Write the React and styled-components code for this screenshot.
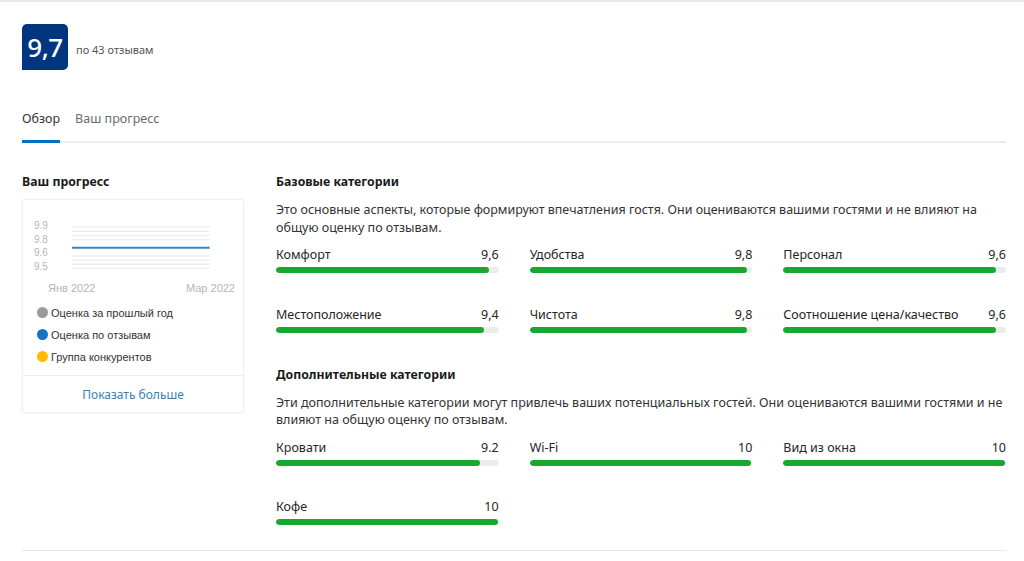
import React from 'react'
import styled, { createGlobalStyle } from 'styled-components';

const GlobalStyle = createGlobalStyle`
  body {
    margin: 0;
    background: #fff;
    font-family: "Noto Sans", "Open Sans", sans-serif;
    color: #262626;
  }
`;

const Page = styled.div`
  border-top: 2px solid #e8e8e8;
  padding: 22px 18px 0 22px;
`;

const Header = styled.div`
  display: flex;
  align-items: center;
  gap: 8px;
`;

const ScoreBadge = styled.div`
  width: 46px;
  height: 46px;
  background: #003580;
  border-radius: 5px 5px 5px 0;
  color: #fff;
  display: flex;
  align-items: center;
  justify-content: center;
  font-size: 26px;
  font-weight: 500;
  letter-spacing: -0.5px;
`;

const ReviewCount = styled.span`
  font-size: 11px;
  color: #555;
  padding-top: 4px;
`;

const Tabs = styled.div`
  display: flex;
  gap: 15px;
  margin-top: 40px;
  border-bottom: 2px solid #ececec;
`;

const Tab = styled.div`
  font-size: 12.5px;
  color: ${p => (p.$active ? '#333' : '#6b6b6b')};
  padding-bottom: 13px;
  margin-bottom: -2px;
  border-bottom: 3px solid ${p => (p.$active ? '#0071c2' : 'transparent')};
`;

const Main = styled.div`
  display: flex;
  gap: 32px;
  padding-top: 30px;
  padding-bottom: 25px;
  border-bottom: 1px solid #e6e6e6;
`;

const Sidebar = styled.div`
  width: 222px;
  flex-shrink: 0;
`;

const Heading = styled.h3`
  margin: 0;
  font-size: 12.3px;
  font-weight: 700;
  color: #1a1a1a;
  line-height: 18px;
`;

const Card = styled.div`
  margin-top: 8px;
  border: 1px solid #f0f0f0;
  border-radius: 2px;
  box-shadow: 0 1px 3px rgba(0, 0, 0, 0.04);
`;

const ChartArea = styled.div`
  padding: 19px 8px 0 11px;
`;

const ChartRow = styled.div`
  display: flex;
`;

const YAxis = styled.div`
  display: flex;
  flex-direction: column;
  width: 38px;
  font-family: "Liberation Sans", Arial, sans-serif;
  font-size: 10px;
  color: #b5b5b5;
  line-height: 13.7px;
`;

const XAxis = styled.div`
  display: flex;
  justify-content: space-between;
  padding: 8px 0 0 14px;
  font-family: "Liberation Sans", Arial, sans-serif;
  font-size: 11px;
  color: #b5b5b5;
`;

const Legend = styled.ul`
  list-style: none;
  margin: 0;
  padding: 12px 0 11px 3px;
  display: flex;
  flex-direction: column;
  gap: 8px;
`;

const LegendItem = styled.li`
  display: flex;
  align-items: center;
  gap: 3px;
  font-family: "Liberation Sans", Arial, sans-serif;
  font-size: 11px;
  color: #333;
  line-height: 14px;
`;

const Dot = styled.span`
  width: 11px;
  height: 11px;
  border-radius: 50%;
  background: ${p => p.$color};
`;

const CardFooter = styled.div`
  border-top: 1px solid #eee;
  text-align: center;
  padding: 10px 0 9px;
  font-size: 12px;
  color: #3a7fb0;
`;

const Content = styled.div`
  flex: 1;
`;

const Section = styled.section`
  & + & {
    margin-top: 33px;
  }
`;

const Description = styled.p`
  margin: 10px 0 10px;
  font-size: 12.5px;
  line-height: 17.5px;
  color: #333;
`;

const CategoryGrid = styled.div`
  display: grid;
  grid-template-columns: repeat(3, 1fr);
  column-gap: 31px;
  row-gap: 32.5px;
`;

const Category = styled.div``;

const CategoryHead = styled.div`
  display: flex;
  justify-content: space-between;
  font-size: 12.5px;
  color: #262626;
  line-height: 17px;
`;

const Track = styled.div`
  margin-top: 4px;
  height: 6px;
  border-radius: 3px;
  background: #ececec;
  overflow: hidden;
`;

const Fill = styled.div`
  height: 100%;
  border-radius: 3px;
  background: #17a832;
`;

const Chart = () => {
  const grid = [0, 1, 2, 3, 7, 8, 9, 10];
  const y = i => 8 + i * 4.16;
  return (
    <svg width="165" height="52" viewBox="0 0 165 52">
      {grid.map(i => (
        <line key={i} x1="0" x2="139" y1={y(i)} y2={y(i)} stroke="#ececec" strokeWidth="1.3" />
      ))}
      <line x1="0" x2="139" y1={y(5)} y2={y(5)} stroke="#3b82c4" strokeWidth="2" />
    </svg>
  );
};

const base = [
  { name: 'Комфорт', score: '9,6' },
  { name: 'Удобства', score: '9,8' },
  { name: 'Персонал', score: '9,6' },
  { name: 'Местоположение', score: '9,4' },
  { name: 'Чистота', score: '9,8' },
  { name: 'Соотношение цена/качество', score: '9,6' },
];

const extra = [
  { name: 'Кровати', score: '9.2' },
  { name: 'Wi-Fi', score: '10' },
  { name: 'Вид из окна', score: '10' },
  { name: 'Кофе', score: '10' },
];

const CategoryList = ({ items }) => (
  <CategoryGrid>
    {items.map(item => {
      const value = parseFloat(item.score.replace(',', '.'));
      return (
        <Category key={item.name}>
          <CategoryHead>
            <span>{item.name}</span>
            <span>{item.score}</span>
          </CategoryHead>
          <Track>
            <Fill style={{ width: `${value * 10 - 0.5}%` }} />
          </Track>
        </Category>
      );
    })}
  </CategoryGrid>
);

function App() {
  return (
    <>
      <GlobalStyle />
      <Page>
        <Header>
          <ScoreBadge>9,7</ScoreBadge>
          <ReviewCount>по 43 отзывам</ReviewCount>
        </Header>

        <Tabs>
          <Tab $active>Обзор</Tab>
          <Tab>Ваш прогресс</Tab>
        </Tabs>

        <Main>
          <Sidebar>
            <Heading>Ваш прогресс</Heading>
            <Card>
              <ChartArea>
                <ChartRow>
                  <YAxis>
                    <span>9.9</span>
                    <span>9.8</span>
                    <span>9.6</span>
                    <span>9.5</span>
                  </YAxis>
                  <Chart />
                </ChartRow>
                <XAxis>
                  <span>Янв 2022</span>
                  <span>Мар 2022</span>
                </XAxis>
                <Legend>
                  <LegendItem><Dot $color="#9b9b9b" />Оценка за прошлый год</LegendItem>
                  <LegendItem><Dot $color="#1573c3" />Оценка по отзывам</LegendItem>
                  <LegendItem><Dot $color="#febb02" />Группа конкурентов</LegendItem>
                </Legend>
              </ChartArea>
              <CardFooter>Показать больше</CardFooter>
            </Card>
          </Sidebar>

          <Content>
            <Section>
              <Heading>Базовые категории</Heading>
              <Description>
                Это основные аспекты, которые формируют впечатления гостя. Они оцениваются вашими гостями и не влияют на общую оценку по отзывам.
              </Description>
              <CategoryList items={base} />
            </Section>
            <Section>
              <Heading>Дополнительные категории</Heading>
              <Description>
                Эти дополнительные категории могут привлечь ваших потенциальных гостей. Они оцениваются вашими гостями и не влияют на общую оценку по отзывам.
              </Description>
              <CategoryList items={extra} />
            </Section>
          </Content>
        </Main>
      </Page>
    </>
  );
}

export default App
